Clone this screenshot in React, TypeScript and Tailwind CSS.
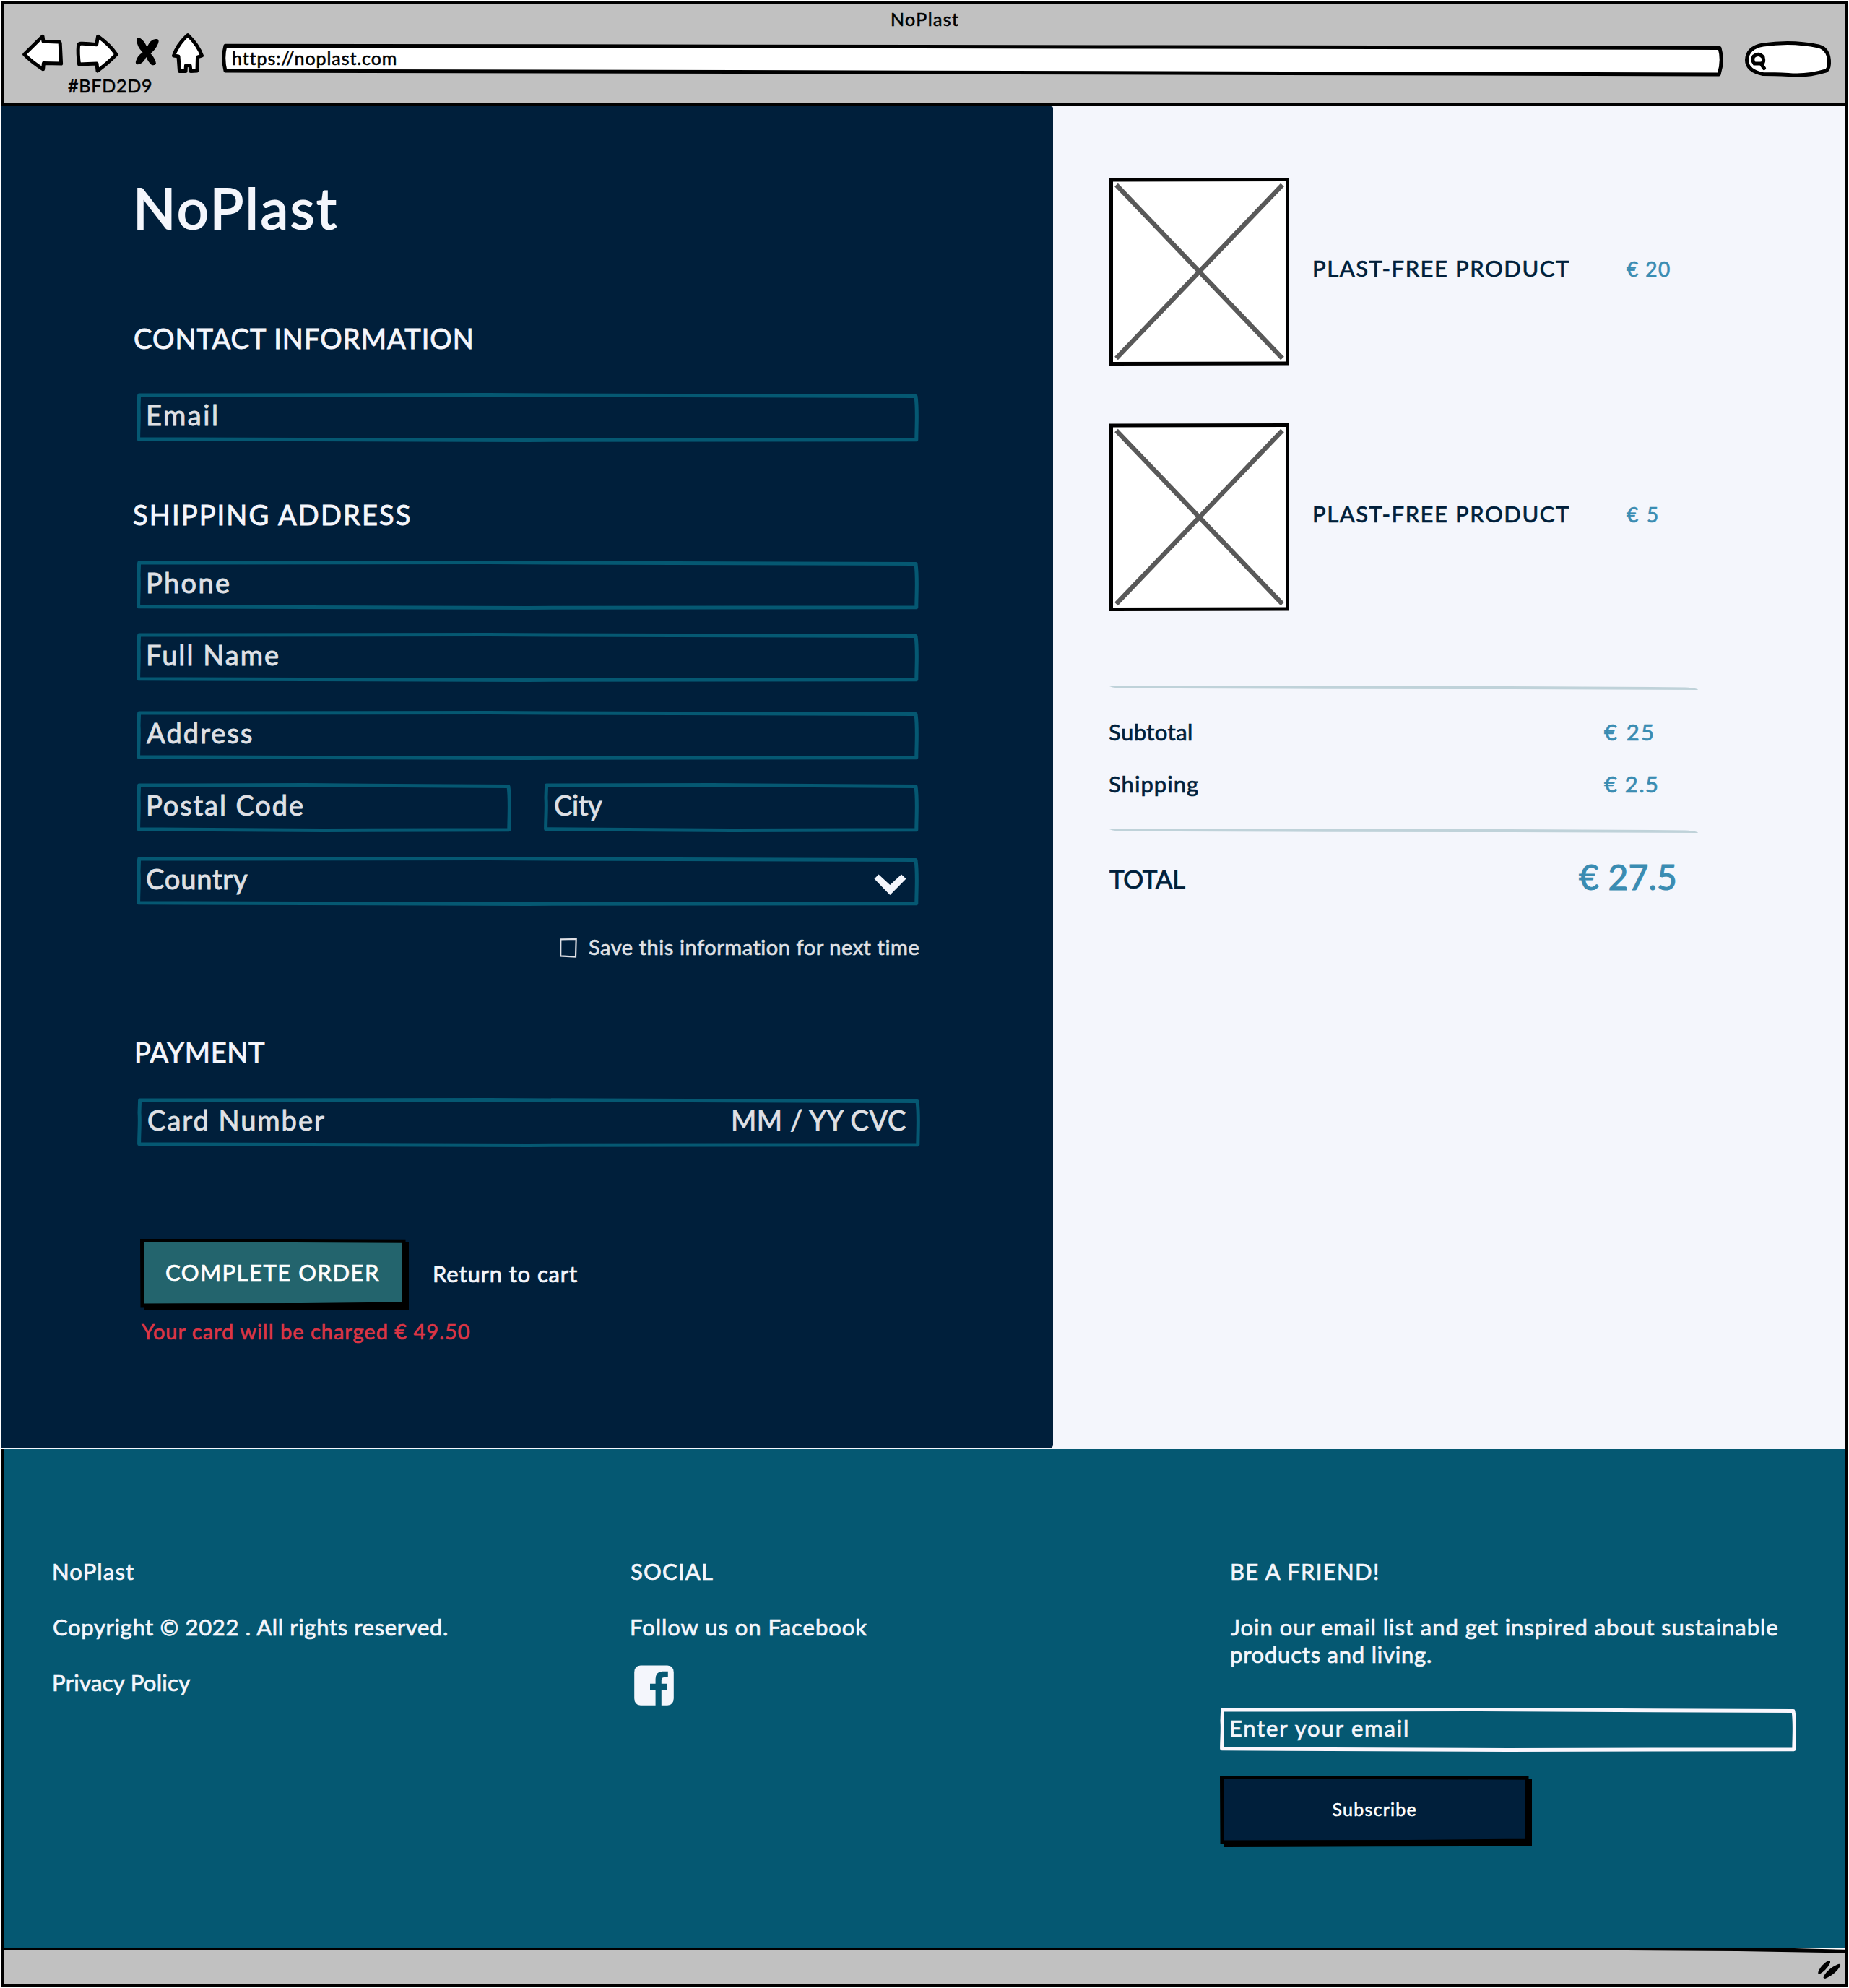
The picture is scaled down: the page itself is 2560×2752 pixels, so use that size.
import { useLayoutEffect, useRef, useState } from "react";
import type { ReactNode } from "react";

const FONT = "font-[Lato,'Open_Sans',sans-serif]";

/** One line of text whose letters are spread so that the ink fills exactly `w` pixels. */
function Line({ w, className = "", children }: { w: number; className?: string; children: string }) {
  const ref = useRef<HTMLSpanElement>(null);
  const [fit, setFit] = useState({ spacing: 0, shift: 0 });

  useLayoutEffect(() => {
    const el = ref.current;
    const ctx = document.createElement("canvas").getContext("2d");
    if (!el || !ctx) return;
    const cs = getComputedStyle(el);
    ctx.font = `${cs.fontWeight} ${cs.fontSize} ${cs.fontFamily}`;
    const m = ctx.measureText(children);
    const ink = m.actualBoundingBoxRight + m.actualBoundingBoxLeft;
    setFit({ spacing: (w - ink) / (children.length - 1), shift: m.actualBoundingBoxLeft });
  }, [w, children]);

  return (
    <span className={`block shrink-0 whitespace-nowrap leading-none ${className}`} style={{ width: w }}>
      <span
        ref={ref}
        className="block [-webkit-text-stroke:0.024em] [stroke-linejoin:round]"
        style={{ letterSpacing: fit.spacing, marginLeft: fit.shift }}
      >
        {children}
      </span>
    </span>
  );
}

/** Hand-drawn rectangle outline that fills its relative parent. */
function SketchBorder({ w, h, color }: { w: number; h: number; color: string }) {
  const d = `M3.6 3 L${w * 0.45} 2.6 L${w - 4} 4.5 C${w - 1.5} ${h * 0.35} ${w - 3} ${h * 0.6} ${w - 3.2} ${h - 3.2} L${w * 0.5} ${h - 2.6} L2.6 ${h - 4.2} C2.6 ${h * 0.7} 4 ${h * 0.5} 3 ${h * 0.3} Z`;
  return (
    <svg className="absolute inset-0" width={w} height={h} viewBox={`0 0 ${w} ${h}`}>
      <path d={d} fill="none" stroke={color} strokeWidth="5" strokeLinejoin="round" />
    </svg>
  );
}

function Field({ w, className = "", children }: { w: number; className?: string; children: ReactNode }) {
  return (
    <div className={`relative flex h-[68px] shrink-0 items-start pt-[11px] text-[38px] text-[#dfe0e5] ${className}`} style={{ width: w }}>
      <SketchBorder w={w} h={68} color="#055872" />
      {children}
    </div>
  );
}

function SketchButton({ w, fill, className = "", children }: { w: number; fill: string; className?: string; children: ReactNode }) {
  return (
    <div className={`relative flex h-[99px] shrink-0 justify-center pr-[5px] ${className}`} style={{ width: w }}>
      <svg className="absolute inset-0" width={w} height={99} viewBox={`0 0 ${w} 99`}>
        <path d={`M6 8 L${w} 4.5 L${w} 98 L${w * 0.5} 98.3 L6 99 Z`} fill="#000" />
        <path
          d={`M2.5 2.5 L${w * 0.3} 2 L${w - 7} 3.2 L${w - 7} 90 L${w * 0.6} 91.5 L3 92 Z`}
          fill={fill}
          stroke="#000"
          strokeWidth="5"
        />
      </svg>
      {children}
    </div>
  );
}

function Placeholder() {
  return (
    <svg className="shrink-0" width="249" height="260" viewBox="0 0 249 260">
      <path d="M2.5 3 L246.5 2.5 L246.5 257 L2.5 257.5 Z" fill="#fff" stroke="#000" strokeWidth="5" />
      <path d="M9.5 10 L239.5 250 M239.5 10 L9.5 250" stroke="#595959" strokeWidth="6.5" />
    </svg>
  );
}

function Divider() {
  return (
    <svg className="block" width="818" height="10" viewBox="0 0 818 10">
      <path d="M0 2 L330 2 L610 3.2 L800 4.4 Q817 5.6 817 8 L560 7 L300 6.8 L18 5.8 Q4 5 0 2 Z" fill="#bfd2d9" />
    </svg>
  );
}

function Product({ price, priceWidth }: { price: string; priceWidth: number }) {
  return (
    <div className="flex">
      <Placeholder />
      <Line w={353} className="ml-[34px] mt-[110px] text-[31px] text-[#001f3b]">
        PLAST-FREE PRODUCT
      </Line>
      <Line w={priceWidth} className="ml-[80px] mt-[112px] text-[28px] text-[#3a8cb2]">
        {price}
      </Line>
    </div>
  );
}

function BrowserBar() {
  return (
    <header className="flex h-[146px] flex-col border-x-5 border-b-4 border-t-5 border-black bg-[#c1c1c1] text-black">
      <Line w={92} className="ml-[2px] mt-[8px] self-center text-[25px]">
        NoPlast
      </Line>
      <div className="-mt-px flex h-[68px]">
        <svg className="ml-[24px] shrink-0" width="60" height="68" viewBox="30 38 60 68">
          <path d="M33.6 75.3 L59 50.3 L60 57.3 L81 58 Q82.8 58 83.2 60 L84.6 88 L60.4 87.5 L59.6 95.8 Q44 86 33.6 75.3 Z" fill="#fff" stroke="#000" strokeWidth="5" strokeLinejoin="round" />
        </svg>
        <svg className="ml-[14px] shrink-0" width="62" height="68" viewBox="104 38 62 68">
          <path d="M112 60.2 Q122 60 133.6 61.8 L135.6 50.3 Q152 62 161 75.3 Q150 87 135 98 L134 88 L109.5 89 Q107.5 74 108.5 63 Q109 60.3 112 60.2 Z" fill="#fff" stroke="#000" strokeWidth="5" strokeLinejoin="round" />
        </svg>
        <svg className="ml-[18px] shrink-0" width="40" height="68" viewBox="184 38 40 68">
          <path d="M190 52 Q198 52 203.5 65 Q209 53 217 54 Q221 54 219 60 Q216 68 208.5 74 Q215 81 216 88 Q215 91 210 90 Q205 86 202.5 79 Q198 88 192 89 Q187 90 188 85 Q190 77 197.5 72.5 Q189 64 189 54 Z" fill="#000" />
        </svg>
        <svg className="ml-[10px] shrink-0" width="52" height="68" viewBox="234 38 52 68">
          <path d="M260 48.5 Q274 62 279.5 77 L273.5 79 L273 98 L264 98.5 L263 90.5 L257.5 90.5 L257 98.5 L248.5 98.5 L247 78 L240.5 77 Q246 61 260 48.5 Z" fill="#fff" stroke="#000" strokeWidth="5" strokeLinejoin="round" />
        </svg>
        <div className="relative ml-[19px] h-[68px] w-[2083px] shrink-0 pl-[17px] pt-[30px]">
          <svg className="absolute inset-0" width="2083" height="68" viewBox="305 38 2083 68">
            <path d="M312 63.2 L900 64 L1600 65 L2381 66.5 Q2386 84 2380 103 L1400 100.5 L312 98 Q307.5 80 312 63.2 Z" fill="#fff" stroke="#000" strokeWidth="5" strokeLinejoin="round" />
          </svg>
          <Line w={225} className="relative text-[25px]">
            https://noplast.com
          </Line>
        </div>
        <svg className="ml-[25px] shrink-0 overflow-visible" width="124" height="68" viewBox="2412 38 124 68">
          <path d="M2440 102.5 Q2417.5 98 2417.5 83 Q2418 66 2440 62 Q2480 56 2517 64 Q2532 68 2531.5 88 Q2531 96 2527 98 Q2500 106 2475 103.5 Q2455 102.5 2440 102.5 Z" fill="#fff" stroke="#000" strokeWidth="5" />
          <path d="M2427 78 Q2434 72 2440 79 Q2442 87 2438 88 L2428 88 Q2424 83 2427 78 Z M2437 88 L2441.5 94.5" fill="none" stroke="#000" strokeWidth="5" strokeLinecap="round" />
        </svg>
      </div>
      <Line w={115} className="ml-[88px] text-[25px]">
        #BFD2D9
      </Line>
    </header>
  );
}

function CheckoutForm() {
  return (
    <section className="flex h-[1858px] w-[1457px] shrink-0 flex-col rounded-br-[5px] rounded-tr-[3px] bg-[#001f3b] text-[#f4f6fc]">
      <Line w={275} className="ml-[190px] mt-[101px] text-[78px]">
        NoPlast
      </Line>
      <Line w={468} className="ml-[185px] mt-[123px] text-[38px]">
        CONTACT INFORMATION
      </Line>
      <Field w={1083} className="ml-[188px] mt-[57px] pl-[16px]">
        <Line w={95}>Email</Line>
      </Field>
      <Line w={383} className="ml-[184px] mt-[81px] text-[38px]">
        SHIPPING ADDRESS
      </Line>
      <Field w={1083} className="ml-[188px] mt-[45px] pl-[16px]">
        <Line w={112}>Phone</Line>
      </Field>
      <Field w={1083} className="ml-[188px] mt-[32px] pl-[16px]">
        <Line w={180}>Full Name</Line>
      </Field>
      <Field w={1083} className="ml-[188px] mt-[40px] pl-[14px]">
        <Line w={145}>Address</Line>
      </Field>
      <div className="ml-[188px] mt-[32px] flex gap-[45px]">
        <Field w={519} className="pl-[16px]">
          <Line w={214}>Postal Code</Line>
        </Field>
        <Field w={519} className="pl-[15px]">
          <Line w={66}>City</Line>
        </Field>
      </div>
      <Field w={1083} className="ml-[188px] mt-[34px] justify-between pl-[14px] pr-[17px]">
        <Line w={140}>Country</Line>
        <svg className="mt-[13px]" width="45" height="29" viewBox="0 0 45 29">
          <path d="M0.5 6.5 L6.5 0.5 L22.3 15 L38 0.5 L44.5 6.5 L22.3 29 Z" fill="#f4f6fc" />
        </svg>
      </Field>
      <div className="ml-[774px] mt-[42px] flex text-[29px] text-[#dfe0e5]">
        <svg className="mt-[3px] shrink-0" width="24" height="27" viewBox="0 0 24 27">
          <path d="M1.3 1.4 L22.7 1 L22 25.6 L1.2 24.4 Z" fill="none" stroke="#dfe0e5" strokeWidth="2.2" />
        </svg>
        <Line w={459} className="ml-[16px]">
          Save this information for next time
        </Line>
      </div>
      <Line w={177} className="ml-[188px] mt-[111px] text-[38px]">
        PAYMENT
      </Line>
      <Field w={1084} className="ml-[189px] mt-[45px] justify-between pl-[15px] pr-[17px]">
        <Line w={244}>Card Number</Line>
        <Line w={242}>MM / YY CVC</Line>
      </Field>
      <div className="ml-[193px] mt-[127px] flex">
        <SketchButton w={372} fill="#23646d">
          <Line w={295} className="relative mt-[31px] text-[31px] text-white">
            COMPLETE ORDER
          </Line>
        </SketchButton>
        <Line w={198} className="ml-[35px] mt-[33px] text-[31px]">
          Return to cart
        </Line>
      </div>
      <Line w={455} className="ml-[195px] mt-[14px] text-[29px] text-[#dc3545]">
        Your card will be charged € 49.50
      </Line>
    </section>
  );
}

function OrderSummary() {
  return (
    <section className="flex grow flex-col border-r-5 border-black bg-[#f4f6fc] pl-[78px] pt-[99px] text-[#001f3b]">
      <div className="flex flex-col gap-[80px]">
        <Product price="€ 20" priceWidth={60} />
        <Product price="€ 5" priceWidth={43} />
      </div>
      <div className="-ml-[2px] mt-[101px]">
        <Divider />
      </div>
      <div className="mt-[41px] flex text-[31px]">
        <div className="w-[685px]">
          <Line w={114}>Subtotal</Line>
        </div>
        <Line w={67} className="text-[#3a8cb2]">
          € 25
        </Line>
      </div>
      <div className="mt-[41px] flex text-[31px]">
        <div className="w-[685px]">
          <Line w={123}>Shipping</Line>
        </div>
        <Line w={73} className="text-[#3a8cb2]">
          € 2.5
        </Line>
      </div>
      <div className="-ml-[2px] mt-[44px]">
        <Divider />
      </div>
      <div className="mt-[35px] flex">
        <div className="w-[650px] pt-[9px] text-[35px]">
          <Line w={105}>TOTAL</Line>
        </div>
        <Line w={133} className="text-[48px] text-[#3a8cb2]">
          € 27.5
        </Line>
      </div>
    </section>
  );
}

function Footer() {
  return (
    <footer className="flex h-[690px] border-x-5 border-black bg-[#055872] pt-[154px] text-[31px] text-[#f4f6fc]">
      <div className="ml-[68px] flex w-[800px] flex-col gap-[46px]">
        <Line w={111}>NoPlast</Line>
        <Line w={546}>Copyright © 2022 . All rights reserved.</Line>
        <Line w={190}>Privacy Policy</Line>
      </div>
      <div className="flex w-[815px] flex-col">
        <Line w={113}>SOCIAL</Line>
        <Line w={327} className="mt-[46px]">
          Follow us on Facebook
        </Line>
        <svg className="ml-[4px] mt-[37px]" width="55" height="56" viewBox="0 0 55 56">
          <path
            d="M9 0.5 H46 Q54.8 1 54.8 10 V46 Q54.8 55 46 55.8 H37.8 V34.2 H45 L46 25.8 H37.8 V21 Q37.8 17.2 41.5 17 H46.8 V8.8 H39 Q30 9.4 29.6 19 V25.8 H22 V34.2 H29.6 V55.8 H9 Q0.2 55 0.2 46 V10 Q0.2 1 9 0.5 Z"
            fill="#f4f6fc"
          />
        </svg>
      </div>
      <div className="flex flex-col">
        <Line w={205} className="ml-[16px]">
          BE A FRIEND!
        </Line>
        <Line w={758} className="ml-[15px] mt-[46px]">
          Join our email list and get inspired about sustainable
        </Line>
        <Line w={276} className="ml-[16px] mt-[7px]">
          products and living.
        </Line>
        <div className="relative mt-[58px] h-[61px] w-[798px] pl-[15px] pt-[13px]">
          <SketchBorder w={798} h={61} color="#faf6fd" />
          <Line w={247}>Enter your email</Line>
        </div>
        <SketchButton w={432} fill="#001f3b" className="mt-[33px]">
          <Line w={116} className="relative mt-[34px] text-[25px] text-white">
            Subscribe
          </Line>
        </SketchButton>
      </div>
    </footer>
  );
}

function StatusBar() {
  return (
    <div className="relative flex h-[55px] items-start justify-end border-x-5 border-b-5 border-black bg-[#c1c1c1]">
      <svg className="absolute left-0 top-0" width="2548" height="10" viewBox="0 0 2548 10">
        <path d="M2400 0 H2548 V4 Z" fill="#fff" />
        <path d="M0 0 H2440 L2548 2.8 V7.5 L2400 5 L2100 3 L0 3 Z" fill="#000" />
      </svg>
      <svg className="mr-[4px] mt-[17px]" width="34" height="27" viewBox="0 0 34 27">
        <path d="M15 1 Q20 1 17 6 Q12 15 3 20 Q0 20 2 15 Q6 7 15 1 Z" fill="#000" />
        <path d="M29 6 Q34 5 31 10 Q24 21 11 26 Q7 26 10 21 Q17 11 29 6 Z" fill="#000" />
      </svg>
    </div>
  );
}

export default function App() {
  return (
    <div className={`flex h-[2752px] w-[2560px] flex-col bg-white px-px pt-px font-normal ${FONT}`}>
      <BrowserBar />
      <main className="flex h-[1859px] items-stretch bg-[#f4f6fc]">
        <CheckoutForm />
        <OrderSummary />
      </main>
      <Footer />
      <StatusBar />
    </div>
  );
}
